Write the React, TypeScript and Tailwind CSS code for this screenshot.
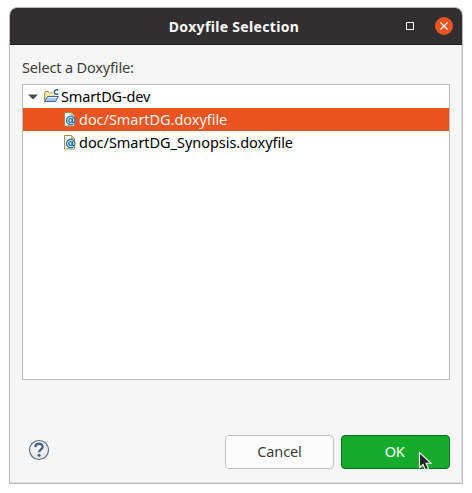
import type { ReactNode } from "react";

function FolderIcon() {
  return (
    <svg width="17" height="16" viewBox="0 0 17 16" className="shrink-0">
      <path d="M1.500 12.500V4L2.500 2.500h3L6.500 4h5v3" fill="#f9e3a4" stroke="#b3923f" />
      <path d="M2.500 5h7.500" stroke="#fff3c8" />
      <path d="M1.500 12.500 4.500 7.500h11l-3 5z" fill="#a9c8f0" stroke="#3f68a8" strokeLinejoin="round" />
      <path d="M5 8.500H14" stroke="#e8f3ff" />
      <path d="M10 .300h6v5.900h-6z" fill="#fff" />
      <path d="M15.300 1.300C13.600.200 11.300.900 11.300 3.100s2.300 2.800 4 1.700" fill="none" stroke="#2c6592" strokeWidth="1.500" />
    </svg>
  );
}

function FileIcon() {
  return (
    <svg width="12" height="15" viewBox="0 0 12 15" className="shrink-0">
      <path d="M.500.500h7L10.500 3.500v10.500H.500z" fill="#f2f6fb" stroke="#a58a48" />
      <path d="M7.500.500v3h3z" fill="#e8cf8c" stroke="#b89a50" strokeWidth=".7" />
      <path d="M9.600 11.600a4.200 4.200 0 1 1 1.400-3.100c0 2.200-2.400 2.700-2.700 1V6.300" fill="#d5ebfb" stroke="#1c6fa9" strokeWidth="1.200" />
      <ellipse cx="6.600" cy="8.500" rx="1.700" ry="2" fill="none" stroke="#1c6fa9" strokeWidth="1.200" />
    </svg>
  );
}

function FileRow({ children, selected = false }: { children: ReactNode; selected?: boolean }) {
  return (
    <div className={`flex h-[23px] items-center pl-[41px] ${selected ? "bg-[#e95420] text-[#fff1eb]" : "text-black"}`}>
      <FileIcon />
      <span className="ml-[3px] whitespace-nowrap tracking-[-0.040px]">{children}</span>
    </div>
  );
}

export default function App() {
  return (
    <div className="h-[493px] w-[472px] bg-white pl-[9px] pt-[7px] font-['Noto_Sans',sans-serif] text-[14.5px] leading-[23px] text-[#3d3d3d]">
      <div className="relative flex h-[477px] w-[454px] flex-col overflow-hidden rounded-t-[8px] border border-[#bcbcbc] bg-[#f6f6f6] shadow-[inset_-1px_-1px_0_#dedede]">
        <header className="grid h-[37px] shrink-0 grid-cols-[1fr_auto_1fr] items-center border-b border-[#1d1b1c] bg-[#322f30] text-white">
          <span />
          <h1 className="-translate-x-[2px] text-[14px] font-bold tracking-[0.330px] text-[#fafafa]">Doxyfile Selection</h1>
          <div className="flex items-center justify-end gap-[21px] pr-[9px]">
            <button aria-label="Maximize" className="size-[8px] border border-white" />
            <button aria-label="Close" className="flex size-[18px] items-center justify-center rounded-full bg-[#e95420]">
              <svg width="10" height="10" viewBox="0 0 10 10">
                <path d="m1.500 1.500 7 7m0-7-7 7" stroke="#fff" strokeWidth="1.300" />
              </svg>
            </button>
          </div>
        </header>
        <main className="flex grow flex-col px-3">
          <label className="mt-[11px] h-[28px] tracking-[-0.160px]">Select a Doxyfile:</label>
          <div className="h-[296px] border border-[#bdbdbd] bg-white">
            <div className="flex h-[23px] items-center pl-[5px] text-black">
              <svg width="10" height="6" viewBox="0 0 10 6">
                <path d="M0 .500h10L5 5.500z" fill="#4b4b4b" />
              </svg>
              <span className="ml-[5px]"><FolderIcon /></span>
              <span className="ml-[1px] tracking-[-0.150px]">SmartDG-dev</span>
            </div>
            <FileRow selected>doc/SmartDG.doxyfile</FileRow>
            <FileRow>doc/SmartDG_Synopsis.doxyfile</FileRow>
          </div>
          <footer className="mt-[55px] flex h-[34px] items-center">
            <button aria-label="Help" className="-mt-[5px] ml-[6px]">
              <svg width="22" height="22" viewBox="0 0 22 22">
                <defs>
                  <linearGradient id="help" x2="0" y2="1">
                    <stop stopColor="#fff" />
                    <stop offset="1" stopColor="#e4e4e4" />
                  </linearGradient>
                </defs>
                <circle cx="11" cy="11" r="9.500" fill="url(#help)" stroke="#5d708f" strokeWidth="1.200" />
                <path d="M7.300 8.100C7.500 3.700 14.700 3.700 14.700 7.700c0 2.600-3.600 2.700-3.600 5.600" fill="none" stroke="#485f88" strokeWidth="2.300" />
                <circle cx="11.100" cy="16.300" r="1.500" fill="#485f88" />
              </svg>
            </button>
            <button className="ml-auto h-[34px] w-[109px] rounded-[4px] border border-[#c0c0c0] bg-[#fcfcfc] pb-[2px] tracking-[-0.100px]">Cancel</button>
            <button className="ml-[7px] h-[34px] w-[109px] rounded-[4px] border border-[#0c701b] bg-[#15ab2c] pb-[2px] pr-[2px] tracking-[-0.300px] text-white">OK</button>
          </footer>
        </main>
        <svg className="absolute left-[408px] top-[443px]" width="15" height="21" viewBox="0 0 15 21">
          <path d="M1.500 1.500v15l3.500-3 2.500 5.500 3-1.400-2.500-5.300H13z" fill="#222" stroke="#f3f3f3" strokeWidth="1.100" />
        </svg>
      </div>
    </div>
  );
}
